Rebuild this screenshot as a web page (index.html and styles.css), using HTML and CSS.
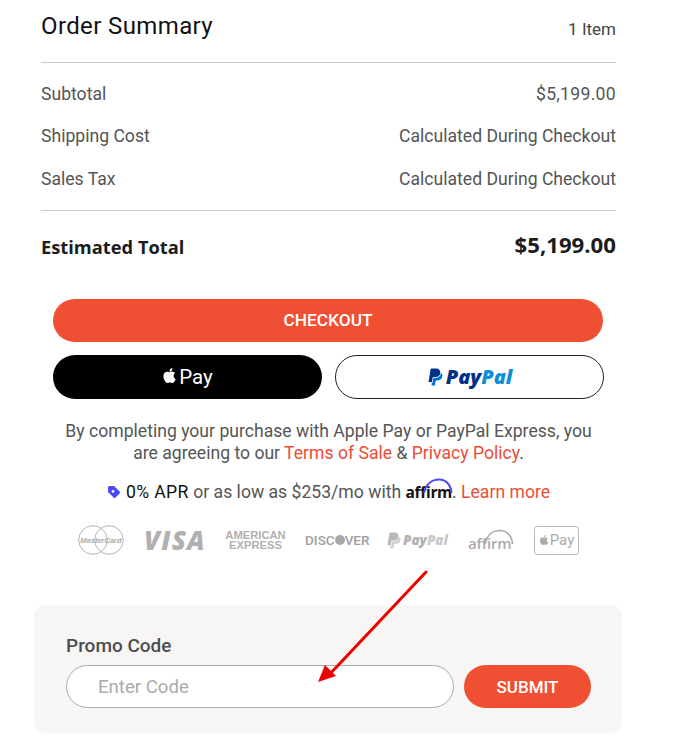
FILE: index.html
```html
<!DOCTYPE html>
<html lang="en">
<head>
<meta charset="utf-8">
<title>Order Summary</title>
<link rel="stylesheet" href="styles.css">
</head>
<body>
<main class="page">
  <header class="head">
    <h1 class="title">Order Summary</h1>
    <span class="count">1 Item</span>
  </header>
  <section class="rows">
    <div class="row"><span>Subtotal</span><span class="num">$5,199.00</span></div>
    <div class="row"><span>Shipping Cost</span><span>Calculated During Checkout</span></div>
    <div class="row"><span>Sales Tax</span><span>Calculated During Checkout</span></div>
  </section>
  <div class="total"><span class="total-label">Estimated Total</span><span class="total-value">$5,199.00</span></div>

  <section class="actions">
    <button class="btn checkout">CHECKOUT</button>
    <div class="express">
      <button class="btn apple">
        <svg class="apple-mark" viewBox="0 0 24 24"><path fill="#fff" d="M12.152 6.896c-.948 0-2.415-1.078-3.96-1.04-2.04.027-3.91 1.183-4.961 3.014-2.117 3.675-.546 9.103 1.519 12.09 1.013 1.454 2.208 3.09 3.792 3.039 1.52-.065 2.09-.987 3.935-.987 1.831 0 2.35.987 3.96.948 1.637-.026 2.676-1.48 3.676-2.948 1.156-1.688 1.636-3.325 1.662-3.415-.039-.013-3.182-1.221-3.22-4.857-.026-3.04 2.48-4.494 2.597-4.559-1.429-2.09-3.623-2.324-4.39-2.376-2-.156-3.675 1.09-4.61 1.09zM15.53 3.83c.843-1.012 1.4-2.427 1.245-3.83-1.207.052-2.662.805-3.532 1.818-.78.896-1.454 2.338-1.273 3.714 1.338.104 2.715-.688 3.559-1.701"/></svg>
        <span>Pay</span>
      </button>
      <button class="btn paypal">
        <svg class="pp-mark" viewBox="0 0 24 24"><path fill="#003087" d="M7.016 19.198h-4.2a.562.562 0 0 1-.555-.65L5.093.584A.692.692 0 0 1 5.776 0h7.222c3.417 0 5.904 2.488 5.846 5.5-.006.25-.027.5-.066.747A6.794 6.794 0 0 1 12.071 12H8.743a.69.69 0 0 0-.682.583l-.325 2.056-.013.083-.692 4.39-.015.087z"/><path fill="#0070e0" d="M19.79 6.142c-.01.087-.01.175-.023.261a7.76 7.76 0 0 1-7.695 6.598H9.007l-.283 1.795-.013.083-.692 4.39-.134.843-.014.088H6.86l-.497 3.15a.562.562 0 0 0 .555.65h3.612c.34 0 .63-.249.683-.585l.952-6.031a.692.692 0 0 1 .683-.584h2.126a6.793 6.793 0 0 0 6.707-5.752c.306-1.95-.466-3.744-1.89-4.906z"/></svg>
        <span class="pp-word"><span class="pp-pay">Pay</span><span class="pp-pal">Pal</span></span>
      </button>
    </div>
    <p class="legal">By completing your purchase with Apple Pay or PayPal Express, you are agreeing to our <a class="link">Terms of Sale</a> &amp; <a class="link">Privacy Policy</a>.</p>
    <p class="apr">
      <svg class="tag" viewBox="0 0 14 14"><path fill="#4a4af4" fill-rule="evenodd" d="M1 2.500A1.500 1.500 0 0 1 2.500 1H7l5.600 5.600a1.400 1.400 0 0 1 0 2L8.600 12.600a1.400 1.400 0 0 1-2 0L1 7zM6 5a1.400 1.400 0 1 0 0 2.800A1.400 1.400 0 0 0 6 5z"/></svg>
      <span class="apr-strong">0% APR</span> or as low as $253/mo with <span class="affirm">affirm<svg class="affirm-arc" viewBox="0 0 30 16"><path fill="none" stroke="#4a4af4" stroke-width="2" d="M1 15C3 6 9 1.500 16 1.500 23 1.500 28 7 28.500 15"/></svg></span>. <a class="link">Learn more</a>
    </p>
    <div class="logos">
      <svg class="mc" viewBox="0 0 46 30"><circle cx="15" cy="15" r="14.300" fill="none" stroke="#b4b4b4"/><circle cx="31" cy="15" r="14.300" fill="none" stroke="#b4b4b4"/><text x="23" y="17.800" text-anchor="middle" class="mc-text">MasterCard</text></svg>
      <span class="visa">VISA</span>
      <span class="amex">AMERICAN<br>EXPRESS</span>
      <span class="discover">DISC<span class="disc-dot"></span>VER</span>
      <span class="pp-gray">
        <svg class="pp-gray-mark" viewBox="0 0 24 24"><path fill="#b8b8b8" d="M7.016 19.198h-4.2a.562.562 0 0 1-.555-.65L5.093.584A.692.692 0 0 1 5.776 0h7.222c3.417 0 5.904 2.488 5.846 5.5-.006.25-.027.5-.066.747A6.794 6.794 0 0 1 12.071 12H8.743a.69.69 0 0 0-.682.583l-.325 2.056-.013.083-.692 4.39-.015.087z"/><path fill="#cfcfcf" d="M19.79 6.142c-.01.087-.01.175-.023.261a7.76 7.76 0 0 1-7.695 6.598H9.007l-.283 1.795-.013.083-.692 4.39-.134.843-.014.088H6.86l-.497 3.15a.562.562 0 0 0 .555.65h3.612c.34 0 .63-.249.683-.585l.952-6.031a.692.692 0 0 1 .683-.584h2.126a6.793 6.793 0 0 0 6.707-5.752c.306-1.95-.466-3.744-1.89-4.906z"/></svg>
        <span class="pp-gray-word"><span class="pp-gray-pay">Pay</span><span class="pp-gray-pal">Pal</span></span>
      </span>
      <span class="affirm-gray">affirm<svg class="affirm-gray-arc" viewBox="0 0 30 16"><path fill="none" stroke="#aaa" stroke-width="1.600" d="M1 15C3 6 9 1.500 16 1.500 23 1.500 28 7 28.500 15"/></svg></span>
      <span class="apay">
        <svg class="apay-mark" viewBox="0 0 24 24"><path fill="#aaa" d="M12.152 6.896c-.948 0-2.415-1.078-3.96-1.04-2.04.027-3.91 1.183-4.961 3.014-2.117 3.675-.546 9.103 1.519 12.09 1.013 1.454 2.208 3.09 3.792 3.039 1.52-.065 2.09-.987 3.935-.987 1.831 0 2.35.987 3.96.948 1.637-.026 2.676-1.48 3.676-2.948 1.156-1.688 1.636-3.325 1.662-3.415-.039-.013-3.182-1.221-3.22-4.857-.026-3.04 2.48-4.494 2.597-4.559-1.429-2.09-3.623-2.324-4.39-2.376-2-.156-3.675 1.09-4.61 1.09zM15.530 3.830c.843-1.012 1.400-2.427 1.245-3.830-1.207.052-2.662.805-3.532 1.818-.78.896-1.454 2.338-1.273 3.714 1.338.104 2.715-.688 3.559-1.701"/></svg>Pay
      </span>
    </div>
  </section>

  <section class="promo">
    <label class="promo-label" for="code">Promo Code</label>
    <div class="promo-form">
      <input class="promo-input" id="code" placeholder="Enter Code">
      <button class="btn submit">SUBMIT</button>
    </div>
  </section>
</main>
<svg class="arrow" viewBox="0 0 120 120"><path fill="none" stroke="#ee0000" stroke-width="3" stroke-linecap="round" d="M108 3 L10 107"/><path fill="#ee0000" d="M0 113 L7 96 L18 107 Z"/></svg>
</body>
</html>
```
FILE: styles.css
```css
* { box-sizing: border-box; }
html, body { margin: 0; padding: 0; background: #fff; }
body { width: 677px; height: 750px; overflow: hidden; position: relative; font-family: Roboto, "Liberation Sans", sans-serif; color: #555; }
.page { width: 575px; margin-left: 41px; }
.head { height: 63px; border-bottom: 1px solid #ccc; display: flex; justify-content: space-between; padding-top: 11px; }
.title { margin: 0; font-size: 24px; line-height: 30px; font-weight: 400; color: #111; letter-spacing: 0.38px; }
.count { font-size: 17px; line-height: 24px; padding-top: 6px; color: #444; }
.rows { padding: 9.600px 0 9.900px; border-bottom: 1px solid #ccc; }
.row { display: flex; justify-content: space-between; height: 42.500px; align-items: center; font-size: 17.600px; color: #555; }
.num { letter-spacing: 0.3px; }
.total { display: flex; justify-content: space-between; align-items: center; height: 70px; font-family: "Open Sans", sans-serif; font-weight: 700; color: #1c1c1c; }
.total-label { font-size: 18.300px; margin-top: 2px; }
.total-value { font-size: 22.200px; margin-bottom: 3px; }
.actions { margin: 18px 12px 0; display: flex; flex-direction: column; }
.btn { border: 0; border-radius: 22px; font-family: Roboto, sans-serif; cursor: pointer; padding: 0; }
.checkout { height: 43px; background: #ef5033; color: #fff; font-size: 17.300px; font-weight: 500; width: 550px; }
.express { display: flex; gap: 13px; margin-top: 13px; }
.apple { width: 269px; height: 44px; background: #000; color: #fff; font-size: 20.500px; display: flex; align-items: center; justify-content: center; gap: 2px; }
.apple-mark { width: 15px; height: 17px; margin-bottom: 3px; }
.paypal { width: 269px; height: 44px; background: #fff; border: 1px solid #222; display: flex; align-items: center; justify-content: center; gap: 2px; }
.pp-mark { width: 17px; height: 20px; }
.pp-word { font-family: "Open Sans", sans-serif; font-style: italic; font-weight: 800; font-size: 20px; }
.pp-pay { color: #003087; }
.pp-pal { color: #0a8fdc; }
.legal { margin: 21px 0 0; text-align: center; font-size: 17.600px; line-height: 22px; color: #555; }
.link { color: #ee4c35; }
.apr { margin: 16px 0 0; height: 24px; display: flex; align-items: center; justify-content: center; white-space: pre; font-size: 17.600px; color: #555; }
.tag { width: 14px; height: 14px; margin-right: 5px; }
.apr-strong { color: #111; letter-spacing: 0.4px; }
.affirm { position: relative; font-family: "Open Sans", sans-serif; font-weight: 700; font-size: 15.500px; color: #111; letter-spacing: -0.3px; }
.affirm-arc { position: absolute; right: -1px; top: -3px; width: 30px; height: 16px; }
.logos { margin: 22px 0 0 25px; height: 29px; display: flex; align-items: center; color: #aaa; }
.mc { width: 46px; height: 30px; flex: none; }
.mc-text { font-family: "Liberation Sans", sans-serif; font-style: italic; font-weight: 700; font-size: 7.500px; fill: #aaa; }
.visa { margin-left: 20px; width: 62px; font-family: "Open Sans", sans-serif; font-style: italic; font-weight: 800; font-size: 26px; letter-spacing: 1.200px; color: #b0b0b0; line-height: 1; }
.amex { margin-left: 19px; width: 61px; font-family: "Liberation Sans", sans-serif; font-weight: 700; font-size: 11.200px; line-height: 10px; text-align: center; color: #b0b0b0; }
.discover { margin-left: 19px; width: 64px; display: flex; align-items: center; font-family: Roboto, sans-serif; font-size: 13.500px; font-weight: 500; color: #a0a0a0; white-space: nowrap; }
.disc-dot { flex: none; width: 10px; height: 10px; border-radius: 50%; background: #a8a8a8; }
.pp-gray { margin-left: 17px; width: 64px; display: flex; align-items: center; gap: 1px; }
.pp-gray-mark { width: 16px; height: 19px; flex: none; }
.pp-gray-word { font-family: "Open Sans", sans-serif; font-style: italic; font-weight: 800; font-size: 13.500px; }
.pp-gray-pay { color: #b0b0b0; }
.pp-gray-pal { color: #c8c8c8; }
.affirm-gray { position: relative; margin-left: 18px; width: 48px; font-family: "Open Sans", sans-serif; font-size: 15px; font-weight: 600; color: #aaa; letter-spacing: -0.2px; padding-top: 5px; }
.affirm-gray-arc { position: absolute; right: 2px; top: 1px; width: 30px; height: 16px; }
.apay { margin-left: 18px; width: 45px; height: 29px; border: 1px solid #bbb; border-radius: 3px; display: flex; align-items: center; justify-content: center; gap: 1px; font-family: Roboto, sans-serif; font-size: 15px; color: #aaa; }
.apay-mark { width: 10px; height: 12px; }
.promo { height: 128px; position: absolute; top: 605px; left: 34px; width: 588px; background: #f8f6f4; border-radius: 12px; padding: 30px 31px 0 32px; }
.promo-label { display: block; font-size: 19px; line-height: 22px; font-weight: 500; color: #4a4d52; }
.promo-form { display: flex; gap: 10px; margin-top: 8px; }
.promo-input { width: 388px; height: 43px; border: 1px solid #aaa; border-radius: 22px; background: #fff; padding: 1px 31px 0; font-family: Roboto, sans-serif; font-size: 18.600px; outline: none; }
.promo-input::placeholder { color: #a9abad; opacity: 1; }
.submit { width: 127px; height: 43px; background: #ef5033; color: #fff; font-size: 17px; font-weight: 500; }
.arrow { position: absolute; left: 318px; top: 569px; width: 120px; height: 120px; }
```
